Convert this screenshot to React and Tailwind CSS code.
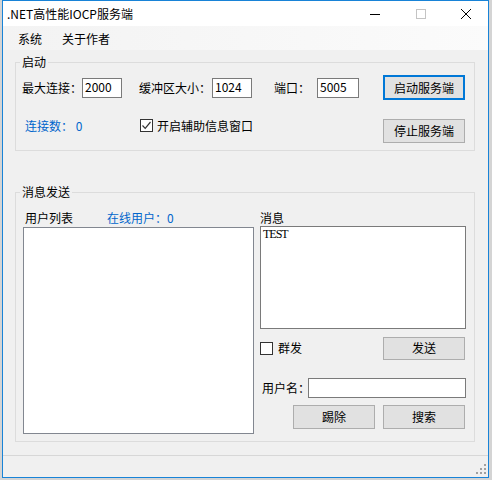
import React from 'react';

// Classic WinForms look: system gray client area, 1px-bordered boxes, flat gray buttons.
function TextBox({ className = '', children }) {
  return (
    <div className={`h-[20px] shrink-0 border border-[#7a7a7a] bg-white pl-[2px] leading-[16px] text-black ${className}`}>
      {children}
    </div>
  );
}

function Btn({ primary, className = '', children }) {
  const edge = primary ? 'border-2 border-[#0078d7]' : 'border border-[#adadad]';
  return (
    <button className={`shrink-0 flex items-center justify-center bg-[#e1e1e1] leading-[16px] text-[12px] text-black ${edge} ${className}`}>
      {children}
    </button>
  );
}

function Check({ checked }) {
  return (
    <span className="w-[13px] h-[13px] shrink-0 border border-[#333333] bg-white flex items-center justify-center">
      {checked && (
        <svg width="11" height="11" viewBox="0 0 11 11">
          <path d="M1.5 5.5 L4.2 8.3 L9.5 2" stroke="#333333" strokeWidth="1.2" fill="none" />
        </svg>
      )}
    </span>
  );
}

function Group({ title, className = '', children }) {
  return (
    <fieldset className={`w-[460px] border border-[#dcdcdc] ${className}`}>
      <legend className="ml-[4px] px-[2px] leading-[16px]">{title}</legend>
      {children}
    </fieldset>
  );
}

export default function App() {
  return (
    <div className="w-[492px] h-[480px] overflow-hidden bg-[#d4d4d4] font-['Noto_Sans_CJK_SC',sans-serif] text-[12px] text-black">
      <div className="ml-[2px] w-[487px] h-[478px] border border-[#1883d7] bg-[#f0f0f0] flex flex-col">
        {/* title bar */}
        <div className="h-[25px] shrink-0 bg-white flex items-center">
          <span className="ml-[4px] leading-[16px]">.NET高性能IOCP服务端</span>
          <div className="ml-auto flex h-full">
            <div className="w-[46px] flex items-center justify-center">
              <svg width="10" height="10" viewBox="0 0 10 10">
                <path d="M0 5.5 H10" stroke="#000" strokeWidth="1" />
              </svg>
            </div>
            <div className="w-[46px] flex items-center justify-center">
              <svg width="10" height="10" viewBox="0 0 10 10">
                <rect x="0.5" y="0.5" width="9" height="9" stroke="#c4c4c4" strokeWidth="1" fill="none" />
              </svg>
            </div>
            <div className="w-[44px] flex items-center justify-center">
              <svg width="10" height="10" viewBox="0 0 10 10">
                <path d="M0 0 L10 10 M10 0 L0 10" stroke="#000" strokeWidth="1" />
              </svg>
            </div>
          </div>
        </div>

        {/* menu strip */}
        <div className="h-[24px] shrink-0 flex items-center pt-[1px] bg-gradient-to-r from-[#f3f3f3] to-[#fbfbfb]">
          <span className="ml-[15px] leading-[16px]">系统</span>
          <span className="ml-[20px] leading-[16px]">关于作者</span>
        </div>

        {/* client area */}
        <div className="flex-1 pl-[12px] pt-[4px]">
          <Group title="启动" className="h-[97px]">
            <div className="mt-[5px] h-[25px] flex items-center whitespace-nowrap">
              <span className="ml-[6px] w-[60px] shrink-0 leading-[16px]">最大连接：</span>
              <TextBox className="w-[40px]">2000</TextBox>
              <span className="ml-[17px] w-[73px] shrink-0 leading-[16px]">缓冲区大小：</span>
              <TextBox className="w-[40px]">1024</TextBox>
              <span className="ml-[22px] w-[43px] shrink-0 leading-[16px]">端口：</span>
              <TextBox className="w-[42px]">5005</TextBox>
              <Btn primary className="ml-[24px] w-[82px] h-[25px]">启动服务端</Btn>
            </div>
            <div className="mt-[19px] flex items-start whitespace-nowrap">
              <div className="ml-[9px] w-[115px] h-[13px] shrink-0 flex items-center leading-[16px] text-[#0066cc]">连接数： 0</div>
              <Check checked />
              <span className="ml-[4px] h-[13px] flex items-center leading-[16px]">开启辅助信息窗口</span>
              <Btn className="ml-auto mr-[9px] w-[82px] h-[24px]">停止服务端</Btn>
            </div>
          </Group>

          <Group title="消息发送" className="mt-[33px] h-[258px]">
            <div className="flex">
              <div className="ml-[7px] w-[231px] shrink-0">
                <div className="mt-[10px] h-[16px] flex leading-[16px] whitespace-nowrap">
                  <span className="pl-[2px] w-[84px] shrink-0">用户列表</span>
                  <span className="text-[#0066cc]">在线用户：0</span>
                </div>
                <div className="mt-[1px] h-[207px] border border-[#828790] bg-white" />
              </div>

              <div className="ml-[6px] w-[206px] shrink-0">
                <div className="mt-[10px] h-[16px] leading-[16px]">消息</div>
                <div className="h-[103px] border border-[#7a7a7a] bg-white pl-[2px] pt-[1px] font-['Liberation_Serif',serif] text-[12px] leading-[13px] tracking-[-1px]">
                  TEST
                </div>
                <div className="mt-[7px] h-[24px] flex items-center">
                  <Check />
                  <span className="ml-[5px] leading-[16px]">群发</span>
                  <Btn className="ml-auto mr-[1px] w-[82px] h-[23px]">发送</Btn>
                </div>
                <div className="mt-[18px] h-[20px] flex items-center">
                  <span className="pl-[2px] w-[48px] shrink-0 leading-[16px] whitespace-nowrap">用户名：</span>
                  <TextBox className="flex-1" />
                </div>
                <div className="mt-[7px] flex justify-end gap-[8px] pr-[1px]">
                  <Btn className="w-[82px] h-[24px]">踢除</Btn>
                  <Btn className="w-[82px] h-[24px]">搜索</Btn>
                </div>
              </div>
            </div>
          </Group>
        </div>

        {/* status strip with size grip */}
        <div className="h-[22px] shrink-0 border-t border-[#d7d7d7] flex justify-end items-end">
          <svg width="12" height="12" viewBox="0 0 12 12" className="mr-[1px] mb-[1px]">
            <g fill="#a0a0a0">
              <rect x="9" y="0" width="2" height="2" />
              <rect x="5" y="4" width="2" height="2" />
              <rect x="9" y="4" width="2" height="2" />
              <rect x="1" y="8" width="2" height="2" />
              <rect x="5" y="8" width="2" height="2" />
              <rect x="9" y="8" width="2" height="2" />
            </g>
          </svg>
        </div>
      </div>
    </div>
  );
}
